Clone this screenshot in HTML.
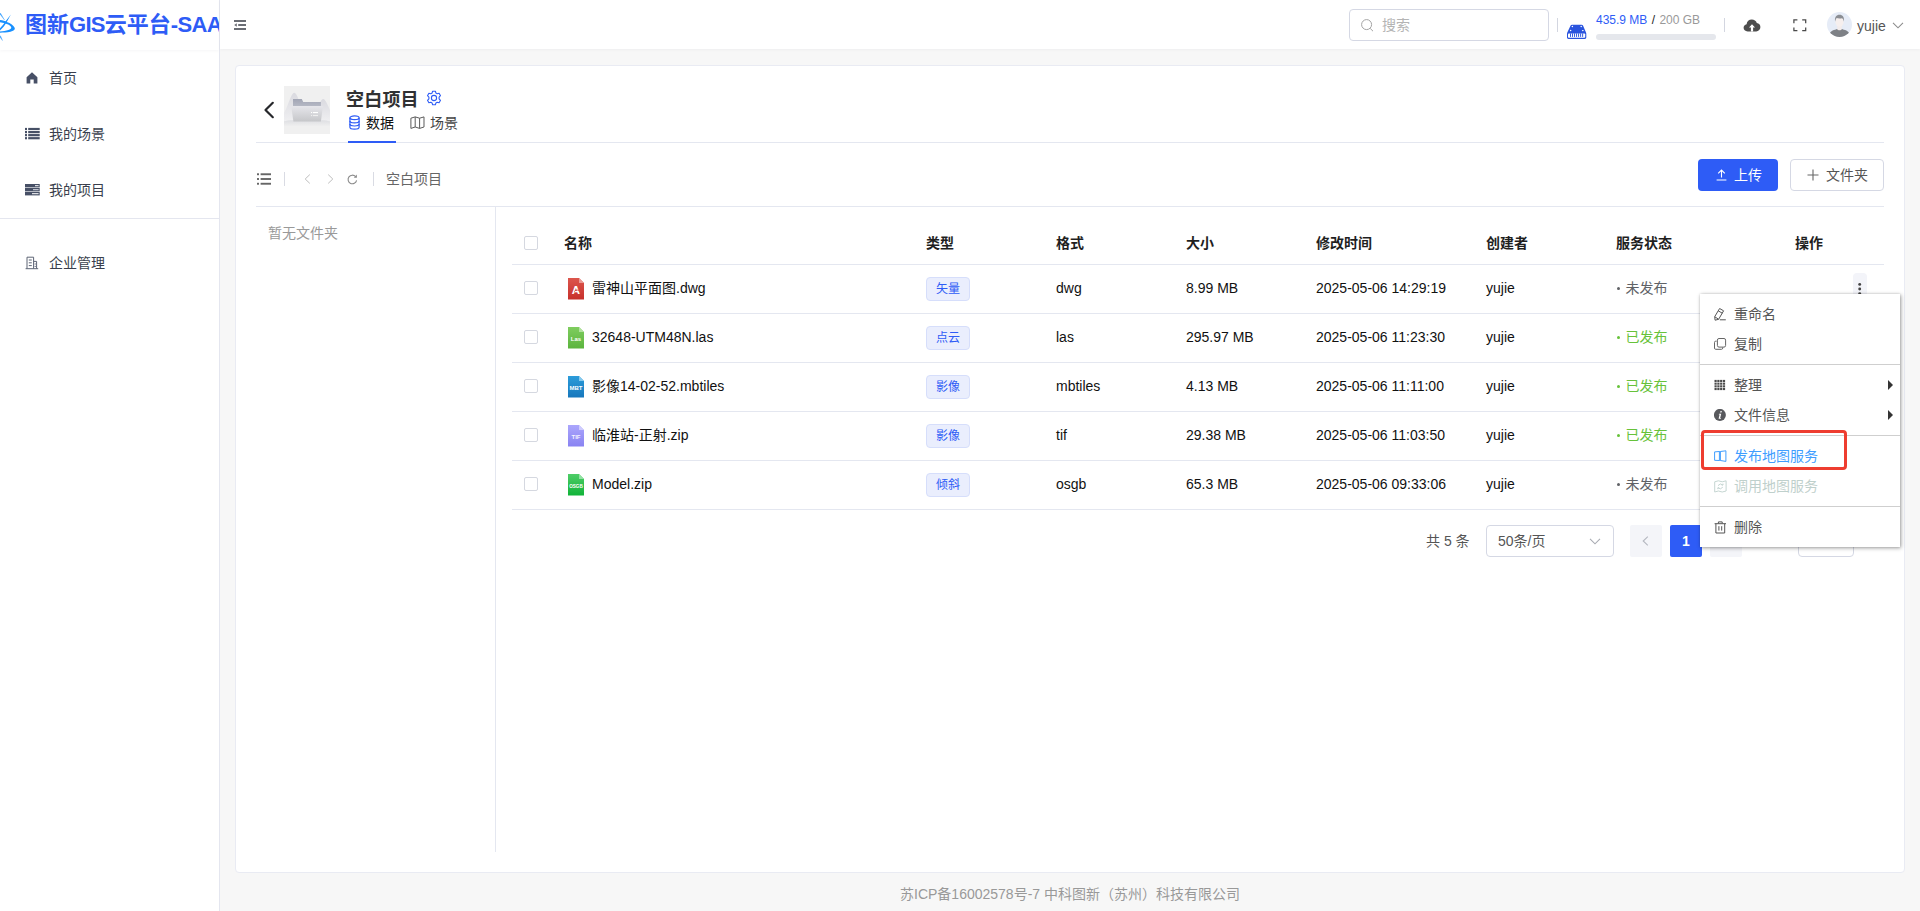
<!DOCTYPE html>
<html lang="zh-CN">
<head>
<meta charset="utf-8">
<title>图新GIS云平台-SAAS</title>
<style>
*{box-sizing:border-box;margin:0;padding:0}
html,body{width:1920px;height:911px;overflow:hidden;background:#f7f7f7}
body{font-family:"Liberation Sans","Noto Sans CJK SC",sans-serif;font-size:14px;color:#1f1f1f;position:relative}
.abs{position:absolute}
svg{display:block}
/* sidebar */
#side{position:absolute;left:0;top:0;width:220px;height:911px;background:#fff;border-right:1px solid #e4e6ef;overflow:hidden}
#logo{position:absolute;left:0;top:0;width:219px;height:50px;overflow:hidden;white-space:nowrap;box-shadow:0 1px 3px rgba(0,21,41,.04)}
#logo .t i{font-style:normal;letter-spacing:-0.7px}
#logo .t{position:absolute;left:25px;top:0;line-height:50px;font-size:22px;font-weight:bold;color:#2e5cf6;letter-spacing:0}
.mi{position:absolute;left:0;width:219px;height:56px;line-height:56px;color:#3a3f4d;font-size:14px}
.mi svg{position:absolute;left:25px;top:21px}
.mi span{position:absolute;left:49px;top:0}
/* header */
#head{position:absolute;left:220px;top:0;width:1700px;height:49px;background:#fff;box-shadow:0 1px 3px rgba(0,21,41,.04)}
/* card */
#card{position:absolute;left:235px;top:65px;width:1670px;height:808px;background:#fff;border:1px solid #e9ebf3;border-radius:4px}
.hl{position:absolute;height:1px;background:#e4e7f0}
.vl{position:absolute;width:1px;background:#e4e7f0}
/* table */
.th{position:absolute;top:234px;font-weight:bold;font-size:14px;line-height:18px;color:#1f1f1f;white-space:nowrap}
.td{position:absolute;font-size:14px;line-height:18px;color:#111;white-space:nowrap}
.cb{position:absolute;left:524px;width:14px;height:14px;border:1px solid #d5d8e0;border-radius:2px;background:#fff}
.tag{position:absolute;left:926px;width:44px;height:24px;border:1px solid #d6defb;background:#eaeefd;border-radius:4px;color:#2e5cf6;font-size:12px;line-height:22px;text-align:center}
.dot{display:inline-block;width:3.4px;height:3.4px;border-radius:50%;background:currentColor;vertical-align:middle;margin:0 5px 2px 1px}
.pub{color:#67c23a}
.unpub{color:#606266}
/* menu */
#menu{position:absolute;left:1700px;top:294px;width:200px;height:253px;background:#fff;box-shadow:1px 1px 4px rgba(0,0,0,.38),0 0 2px rgba(0,0,0,.12);}
#menu .it{position:absolute;left:0;width:200px;height:30px;line-height:30px;font-size:14px;color:#555}
#menu .it span{position:absolute;left:34px;top:0;white-space:nowrap}
#menu .it svg{position:absolute;left:14px;top:9px}
#menu .sep{position:absolute;left:0;width:200px;height:1px;background:#cfcfcf}
#menu .arr{position:absolute;left:188px;top:10px;width:0;height:0;border-left:5px solid #333;border-top:5px solid transparent;border-bottom:5px solid transparent}
</style>
</head>
<body>

<!-- ============ SIDEBAR ============ -->
<div id="side">
  <div id="logo">
    <svg class="abs" style="left:0;top:8px" width="24" height="38" viewBox="0 8 24 38">
      <path d="M0 20.1 C3 20.4 5 21.2 6.8 21.9 C10.5 23.2 13.8 25.2 14.8 28 C15.2 29.6 13.5 31 10.4 31.8 C7 32.6 3 32.7 0 32.7 L0 31.6 C3 31.3 6 30.9 8.3 30.1 C10.5 29.3 11.6 28.5 11.2 27.3 C10.6 25.8 9.2 24.8 7.5 24.2 C5 23.2 2.5 22.6 0 22.2 Z" fill="#1890ff"/>
      <path d="M10.9 14.4 L7.2 21.2 C5 25 2.8 28 0 30.6 L0 28.2 C2.2 26 3.8 24 5.4 21.6 Z" fill="#1890ff"/>
      <path d="M0 12.9 L0.8 13.2 L4.8 19.9 L4.2 20 L0 14.4 Z" fill="#2f9bff" opacity=".85"/>
      <path d="M0 35.4 L0.9 35.9 L2.9 40.8 L2.2 40.6 L0 37.4 Z" fill="#2f9bff" opacity=".8"/>
    </svg>
    <div class="t">图新<i>GIS</i>云平台<i>-SAAS</i></div>
  </div>
  <div class="mi" style="top:50px">
    <svg width="14" height="14" viewBox="0 0 14 14"><path d="M7 1.3 L1.6 6.2 V12.4 H5.3 V8.6 H8.7 V12.4 H12.4 V6.2 Z" fill="#475066"/></svg>
    <span>首页</span>
  </div>
  <div class="mi" style="top:106px">
    <svg width="15" height="14" viewBox="0 0 15 14" style="left:24.7px"><g fill="#475066"><rect x="0" y="0.9" width="2" height="2.2"/><rect x="3.2" y="0.9" width="11.5" height="2.2"/><rect x="0" y="4" width="2" height="2.2"/><rect x="3.2" y="4" width="11.5" height="2.2"/><rect x="0" y="7.05" width="2" height="2.2"/><rect x="3.2" y="7.05" width="11.5" height="2.2"/><rect x="0" y="10.1" width="2" height="2.2"/><rect x="3.2" y="10.1" width="11.5" height="2.2"/></g></svg>
    <span>我的场景</span>
  </div>
  <div class="mi" style="top:162px">
    <svg width="15" height="14" viewBox="0 0 15 14" style="left:24.7px"><g fill="#475066"><rect x="0" y="1" width="14.7" height="3.4"/><rect x="0" y="5" width="14.7" height="3.4"/><rect x="0" y="9" width="14.7" height="3.4"/></g><rect x="10" y="2.2" width="3.6" height="1" fill="#fff"/><rect x="8" y="6.2" width="5.6" height="1" fill="#dfe2ea"/><rect x="7" y="10.2" width="6.6" height="1" fill="#fff"/></svg>
    <span>我的项目</span>
  </div>
  <div class="hl" style="left:0;top:218px;width:219px;background:#e4e6ef"></div>
  <div class="mi" style="top:235px">
    <svg width="14" height="14" viewBox="0 0 14 14"><g fill="none" stroke="#5d6475" stroke-width="1"><path d="M2 12.6 V1.2 H8.6 V12.6"/><path d="M8.6 5.4 H11.6 V12.6"/><path d="M0.6 12.7 H13.2"/><path d="M3.8 4 H6.8 M3.8 6.8 H6.8 M3.8 9.6 H6.8 M9.6 8 H10.8 M9.6 10.4 H10.8"/></g></svg>
    <span>企业管理</span>
  </div>
</div>

<!-- ============ HEADER ============ -->
<div id="head">
  <!-- coordinates inside #head are page-x minus 220 -->
  <svg class="abs" style="left:14px;top:20px" width="12" height="10" viewBox="0 0 12 10"><g fill="#6a6d74"><rect x="0" y="0" width="12" height="2"/><rect x="4.2" y="4" width="7.8" height="2"/><rect x="0" y="8" width="12" height="2"/><path d="M0.2 5 L2.8 3.2 V6.8Z"/></g></svg>
  <div class="abs" style="left:1129px;top:9px;width:200px;height:32px;border:1px solid #d5d8e4;border-radius:4px;background:#fff">
    <svg class="abs" style="left:11px;top:9px" width="13" height="13" viewBox="0 0 13 13"><circle cx="5.6" cy="5.6" r="5" fill="none" stroke="#a3a3a3" stroke-width="1"/><path d="M9.2 9.4 L12 12.2" stroke="#a3a3a3" stroke-width="1" fill="none"/></svg>
    <div class="abs" style="left:32px;top:0;line-height:30px;font-size:14px;color:#b4b4b4">搜索</div>
  </div>
  <div class="vl" style="left:1337px;top:18px;height:14px;background:#d3d6e0"></div>
  <svg class="abs" style="left:1347px;top:24px" width="20" height="16" viewBox="0 0 20 16">
    <path d="M5 0.7 H14.6 Q15.6 0.7 16 1.6 L19 8.6 Q19.3 9.2 19.3 10 V13.6 Q19.3 15 17.9 15 H1.4 Q0 15 0 13.6 V10 Q0 9.2 0.3 8.6 L3.6 1.6 Q4 0.7 5 0.7Z" fill="#2a54de"/>
    <rect x="1" y="9.4" width="17.2" height="4.4" rx="0.8" fill="#fff"/>
    <g fill="#2a54de"><rect x="3.00" y="9.4" width="0.95" height="3.5"/><rect x="5.03" y="9.4" width="0.95" height="3.5"/><rect x="7.06" y="9.4" width="0.95" height="3.5"/><rect x="9.09" y="9.4" width="0.95" height="3.5"/><rect x="11.12" y="9.4" width="0.95" height="3.5"/><rect x="13.15" y="9.4" width="0.95" height="3.5"/><rect x="15.18" y="9.4" width="0.95" height="3.5"/></g>
    <g fill="#fff"><circle cx="5.4" cy="2.6" r=".75"/><circle cx="14.2" cy="2.6" r=".75"/><circle cx="3.6" cy="6.6" r=".75"/><ellipse cx="15.8" cy="6.6" rx=".95" ry=".7"/></g>
  </svg>
  <div class="abs" style="left:1376px;top:12px;font-size:12px;line-height:16px;white-space:nowrap"><span style="color:#2e5cf6">435.9 MB</span> <span style="color:#222;padding:0 1px 0 1px">/</span> <span style="color:#999">200 GB</span></div>
  <div class="abs" style="left:1376px;top:34px;width:120px;height:6px;border-radius:3px;background:#e5e7ec"></div>
  <div class="vl" style="left:1504px;top:18px;height:14px;background:#d3d6e0"></div>
  <svg class="abs" style="left:1523px;top:19px" width="18" height="13" viewBox="0 0 18 13">
    <path d="M4.6 12.4 C2.2 12.4 0.6 10.8 0.6 8.8 C0.6 7 1.8 5.6 3.6 5.2 C3.8 2.4 6 0.4 8.8 0.4 C11.2 0.4 13.2 1.8 13.8 4 C16 4.2 17.4 5.9 17.4 8 C17.4 10.4 15.6 12.4 13.2 12.4 Z" fill="#4d4d4d"/>
    <path d="M9 5.2 L12 8.6 H10.1 V12.4 H7.9 V8.6 H6 Z" fill="#fff"/>
  </svg>
  <svg class="abs" style="left:1572.6px;top:18.6px" width="14" height="13" viewBox="0 0 14 13"><g fill="none" stroke="#4a4a4a" stroke-width="1.25"><path d="M0.9 4.2 V0.9 H4.4"/><path d="M9.2 0.9 H12.7 V4.2"/><path d="M12.7 8.4 V11.7 H9.2"/><path d="M4.4 11.7 H0.9 V8.4"/></g></svg>
  <svg class="abs" style="left:1607px;top:12px" width="25" height="25" viewBox="0 0 25 25">
    <defs><clipPath id="avc"><circle cx="12.5" cy="12.5" r="12.5"/></clipPath></defs>
    <g clip-path="url(#avc)"><rect width="25" height="25" fill="#e6ecf7"/>
    <path d="M1.5 25 C2 20.5 4.5 18.6 8.2 17.8 L10 17 H15 L16.8 17.8 C20.5 18.6 23 20.5 23.5 25 Z" fill="#7e8186"/>
    <path d="M10.2 13.5 H14.8 V17.2 C14.2 18.6 10.8 18.6 10.2 17.2 Z" fill="#f3eceb"/>
    <ellipse cx="12.5" cy="9.8" rx="4.1" ry="4.9" fill="#f6efee"/>
    <path d="M8.1 9.8 C7.4 5 9.4 2.8 12.5 2.8 C15.6 2.8 17.6 5 16.9 9.8 C16.6 7.8 16 6.8 15 6.3 C13.2 6.8 10.8 6.6 9.7 6.1 C8.9 7 8.5 8 8.1 9.8 Z" fill="#8b8e93"/></g>
  </svg>
  <div class="abs" style="left:1637px;top:1px;line-height:50px;font-size:14px;color:#555">yujie</div>
  <svg class="abs" style="left:1672px;top:22px" width="12" height="7" viewBox="0 0 12 7"><path d="M1 0.8 L6 5.8 L11 0.8" fill="none" stroke="#8c8c8c" stroke-width="1.1"/></svg>
</div>

<!-- ============ CARD ============ -->
<div id="card"></div>
<svg class="abs" style="left:263px;top:100px" width="12" height="20" viewBox="0 0 12 20"><path d="M9.8 2.8 L2.5 10 L9.8 17.2" fill="none" stroke="#26272b" stroke-width="2.2" stroke-linecap="round" stroke-linejoin="round"/></svg>
<svg class="abs" style="left:284px;top:86px" width="46" height="48" viewBox="0 0 46 48">
  <defs>
    <linearGradient id="fg" x1="0" y1="0" x2="0" y2="1"><stop offset="0" stop-color="#e6e6eb"/><stop offset="1" stop-color="#c5c6c9"/></linearGradient>
    <linearGradient id="fb" x1="0" y1="0" x2="0" y2="1"><stop offset="0" stop-color="#a2a6b5"/><stop offset="1" stop-color="#b6b9c5"/></linearGradient>
    <linearGradient id="fm" x1="0" y1="0" x2="0" y2="1"><stop offset="0" stop-color="#dadae0"/><stop offset="1" stop-color="#efeff1"/></linearGradient>
    <linearGradient id="fgr" x1="0" y1="0" x2="0" y2="1"><stop offset="0" stop-color="#dcdde1"/><stop offset="1" stop-color="#f0f0f0"/></linearGradient>
  </defs>
  <rect width="46" height="48" fill="#f0f0f0"/>
  <path d="M0 27 C4 21 7 7 10.2 6.8 C13.2 7 15.5 17 19 25 V35 H0Z" fill="url(#fm)"/>
  <path d="M32 25 C35 19 37 13.2 39.2 13.1 C41.6 13.3 44 20 46 24 V35 H32Z" fill="url(#fm)"/>
  <path d="M0 35.2 C8 33.2 38 33.2 46 35.2 V40.5 H0Z" fill="url(#fgr)"/>
  <path d="M9 13.1 H17.8 L19.2 16 H36.9 V20.4 H9Z" fill="url(#fb)"/>
  <path d="M7.2 20 H38.9 L36.9 35.6 H9.4Z" fill="url(#fg)"/>
  <rect x="29" y="26" width="5" height="1.1" fill="#fff"/><rect x="29" y="29" width="5" height="1.1" fill="#eee"/><rect x="27" y="26" width="1.1" height="1.1" fill="#fff"/><rect x="27" y="29" width="1.1" height="1.1" fill="#eee"/>
</svg>
<div class="abs" style="left:346px;top:87px;font-size:18px;font-weight:bold;line-height:26px;color:#303133;white-space:nowrap;letter-spacing:.2px">空白项目</div>
<svg class="abs" style="left:426px;top:90px" width="16" height="16" viewBox="0 0 16 16"><g fill="none" stroke="#2e5cf6" stroke-width="1.1"><path d="M6.6 1.2 H9.4 L9.9 3.1 L11.2 3.8 L13.1 3.3 L14.5 5.7 L13.1 7.1 V8.9 L14.5 10.3 L13.1 12.7 L11.2 12.2 L9.9 12.9 L9.4 14.8 H6.6 L6.1 12.9 L4.8 12.2 L2.9 12.7 L1.5 10.3 L2.9 8.9 V7.1 L1.5 5.7 L2.9 3.3 L4.8 3.8 L6.1 3.1Z" stroke-linejoin="round"/><circle cx="8" cy="8" r="2.6"/></g></svg>
<svg class="abs" style="left:348.6px;top:115px" width="11" height="15" viewBox="0 0 11 15"><g fill="none" stroke="#2e5cf6" stroke-width="1.2"><ellipse cx="5.5" cy="2.8" rx="4.6" ry="1.9"/><path d="M0.9 2.8 V12.2 C0.9 13.3 3 14.1 5.5 14.1 C8 14.1 10.1 13.3 10.1 12.2 V2.8"/><path d="M0.9 6 C0.9 7.1 3 7.9 5.5 7.9 C8 7.9 10.1 7.1 10.1 6"/><path d="M0.9 9.1 C0.9 10.2 3 11 5.5 11 C8 11 10.1 10.2 10.1 9.1"/></g></svg>
<div class="abs" style="left:366px;top:113px;font-size:14px;line-height:20px;color:#111;white-space:nowrap">数据</div>
<svg class="abs" style="left:410.4px;top:116.3px" width="15" height="13.4" viewBox="0 0 15 13.4"><g fill="none" stroke="#5a5a5a" stroke-width="1" stroke-linejoin="round"><path d="M0.9 2.2 L5.2 0.9 L9.6 2.2 L14 0.9 V11 L9.6 12.4 L5.2 11 L0.9 12.4Z"/><path d="M5.2 0.9 V11 M9.6 2.2 V12.4"/></g></svg>
<div class="abs" style="left:430px;top:113px;font-size:14px;line-height:20px;color:#444;white-space:nowrap">场景</div>
<div class="hl" style="left:256px;top:142px;width:1628px"></div>
<div class="abs" style="left:348px;top:141px;width:48px;height:2px;background:#2e5cf6"></div>
<svg class="abs" style="left:257px;top:173px" width="14.4" height="12" viewBox="0 0 14.4 12"><g fill="#666"><rect x="0" y="0.3" width="2" height="1.9"/><rect x="3.6" y="0.3" width="10.6" height="1.9"/><rect x="0" y="5.05" width="2" height="1.9"/><rect x="3.6" y="5.05" width="10.6" height="1.9"/><rect x="0" y="9.8" width="2" height="1.9"/><rect x="3.6" y="9.8" width="10.6" height="1.9"/></g></svg>
<div class="vl" style="left:284px;top:172px;height:14px;background:#d9dbe3"></div>
<svg class="abs" style="left:304px;top:174px" width="7" height="10" viewBox="0 0 7 10"><path d="M5.8 0.6 L1.2 5 L5.8 9.4" fill="none" stroke="#bdbdbd" stroke-width="1"/></svg>
<svg class="abs" style="left:327px;top:174px" width="7" height="10" viewBox="0 0 7 10"><path d="M1.2 0.6 L5.8 5 L1.2 9.4" fill="none" stroke="#bdbdbd" stroke-width="1"/></svg>
<svg class="abs" style="left:347px;top:174px" width="11" height="11" viewBox="0 0 11 11"><path d="M8.6 2.6 A4.3 4.3 0 1 0 9.6 6.4" fill="none" stroke="#8a8a8a" stroke-width="1.1"/><path d="M9.9 0.6 V3.7 H6.8Z" fill="#8a8a8a"/></svg>
<div class="vl" style="left:373px;top:172px;height:14px;background:#d9dbe3"></div>
<div class="abs" style="left:386px;top:169px;font-size:14px;line-height:20px;color:#666;white-space:nowrap">空白项目</div>
<div class="abs" style="left:1698px;top:159px;width:80px;height:32px;border-radius:4px;background:#2e5cf6"><svg class="abs" style="left:18px;top:10px" width="11" height="12" viewBox="0 0 11 12"><g fill="none" stroke="#fff" stroke-width="1.1"><path d="M5.5 8.6 V1.2 M2.2 4.4 L5.5 1.1 L8.8 4.4 M0.6 11 H10.4"/></g></svg><div class="abs" style="left:36px;top:0;line-height:32px;font-size:14px;color:#fff;white-space:nowrap">上传</div></div>
<div class="abs" style="left:1790px;top:159px;width:94px;height:32px;border-radius:4px;background:#fff;border:1px solid #d5d8e4"><svg class="abs" style="left:16px;top:9px" width="12" height="12" viewBox="0 0 12 12"><path d="M6 0.5 V11.5 M0.5 6 H11.5" fill="none" stroke="#666" stroke-width="1.1"/></svg><div class="abs" style="left:35px;top:0;line-height:30px;font-size:14px;color:#555;white-space:nowrap">文件夹</div></div>
<div class="hl" style="left:256px;top:206px;width:1628px"></div>
<div class="vl" style="left:495px;top:206px;height:646px"></div>
<div class="abs" style="left:268px;top:223px;font-size:14px;line-height:20px;color:#999;white-space:nowrap">暂无文件夹</div>
<div class="cb" style="top:236px"></div>
<div class="th" style="left:564px">名称</div>
<div class="th" style="left:926px">类型</div>
<div class="th" style="left:1056px">格式</div>
<div class="th" style="left:1186px">大小</div>
<div class="th" style="left:1316px">修改时间</div>
<div class="th" style="left:1486px">创建者</div>
<div class="th" style="left:1616px">服务状态</div>
<div class="th" style="left:1795px">操作</div>
<div class="hl" style="left:512px;top:264px;width:1372px"></div>
<div class="cb" style="top:281px"></div>
<svg class="abs" style="left:568px;top:278.3px" width="16" height="21.5" viewBox="0 0 16 21.5"><defs><linearGradient id="fi0" x1="0" y1="0" x2="0" y2="1"><stop offset="0" stop-color="#dc564d"/><stop offset="1" stop-color="#c7302b"/></linearGradient></defs><path d="M0 0 H11 L16 5 V21.5 H0Z" fill="url(#fi0)"/><path d="M11 0 L16 5 H11Z" fill="#eb9a94"/><text x="8" y="15.6" font-size="11.5" font-weight="bold" fill="#fff" text-anchor="middle" font-family="Liberation Sans,sans-serif">A</text><path d="M6.2 13.6 C8.5 11.4 10.5 11.6 12.6 14.2" stroke="#d24a42" stroke-width=".9" fill="none"/></svg>
<div class="td" style="left:592px;top:279px">雷神山平面图.dwg</div>
<div class="tag" style="top:277px">矢量</div>
<div class="td" style="left:1056px;top:279px">dwg</div>
<div class="td" style="left:1186px;top:279px">8.99 MB</div>
<div class="td" style="left:1316px;top:279px">2025-05-06 14:29:19</div>
<div class="td" style="left:1486px;top:279px">yujie</div>
<div class="td unpub" style="left:1616px;top:279px"><i class="dot"></i>未发布</div>
<div class="hl" style="left:512px;top:313px;width:1372px"></div>
<div class="cb" style="top:330px"></div>
<svg class="abs" style="left:568px;top:327.3px" width="16" height="21.5" viewBox="0 0 16 21.5"><defs><linearGradient id="fi1" x1="0" y1="0" x2="0" y2="1"><stop offset="0" stop-color="#7fcd5f"/><stop offset="1" stop-color="#5bb43d"/></linearGradient></defs><path d="M0 0 H11 L16 5 V21.5 H0Z" fill="url(#fi1)"/><path d="M11 0 L16 5 H11Z" fill="#b2e29e"/><text x="8" y="14.1" font-size="6" font-weight="bold" fill="#fff" text-anchor="middle" font-family="Liberation Sans,sans-serif">Las</text></svg>
<div class="td" style="left:592px;top:328px">32648-UTM48N.las</div>
<div class="tag" style="top:326px">点云</div>
<div class="td" style="left:1056px;top:328px">las</div>
<div class="td" style="left:1186px;top:328px">295.97 MB</div>
<div class="td" style="left:1316px;top:328px">2025-05-06 11:23:30</div>
<div class="td" style="left:1486px;top:328px">yujie</div>
<div class="td pub" style="left:1616px;top:328px"><i class="dot"></i>已发布</div>
<div class="hl" style="left:512px;top:362px;width:1372px"></div>
<div class="cb" style="top:379px"></div>
<svg class="abs" style="left:568px;top:376.3px" width="16" height="21.5" viewBox="0 0 16 21.5"><defs><linearGradient id="fi2" x1="0" y1="0" x2="0" y2="1"><stop offset="0" stop-color="#2c9cda"/><stop offset="1" stop-color="#1777bc"/></linearGradient></defs><path d="M0 0 H11 L16 5 V21.5 H0Z" fill="url(#fi2)"/><path d="M11 0 L16 5 H11Z" fill="#86c9ed"/><text x="8" y="14.1" font-size="6" font-weight="bold" fill="#fff" text-anchor="middle" font-family="Liberation Sans,sans-serif">MBT</text></svg>
<div class="td" style="left:592px;top:377px">影像14-02-52.mbtiles</div>
<div class="tag" style="top:375px">影像</div>
<div class="td" style="left:1056px;top:377px">mbtiles</div>
<div class="td" style="left:1186px;top:377px">4.13 MB</div>
<div class="td" style="left:1316px;top:377px">2025-05-06 11:11:00</div>
<div class="td" style="left:1486px;top:377px">yujie</div>
<div class="td pub" style="left:1616px;top:377px"><i class="dot"></i>已发布</div>
<div class="hl" style="left:512px;top:411px;width:1372px"></div>
<div class="cb" style="top:428px"></div>
<svg class="abs" style="left:568px;top:425.3px" width="16" height="21.5" viewBox="0 0 16 21.5"><defs><linearGradient id="fi3" x1="0" y1="0" x2="0" y2="1"><stop offset="0" stop-color="#aba6fc"/><stop offset="1" stop-color="#8983f2"/></linearGradient></defs><path d="M0 0 H11 L16 5 V21.5 H0Z" fill="url(#fi3)"/><path d="M11 0 L16 5 H11Z" fill="#cfccfe"/><text x="8" y="14.1" font-size="6" font-weight="bold" fill="#f3f2ff" text-anchor="middle" font-family="Liberation Sans,sans-serif">TIF</text></svg>
<div class="td" style="left:592px;top:426px">临淮站-正射.zip</div>
<div class="tag" style="top:424px">影像</div>
<div class="td" style="left:1056px;top:426px">tif</div>
<div class="td" style="left:1186px;top:426px">29.38 MB</div>
<div class="td" style="left:1316px;top:426px">2025-05-06 11:03:50</div>
<div class="td" style="left:1486px;top:426px">yujie</div>
<div class="td pub" style="left:1616px;top:426px"><i class="dot"></i>已发布</div>
<div class="hl" style="left:512px;top:460px;width:1372px"></div>
<div class="cb" style="top:477px"></div>
<svg class="abs" style="left:568px;top:474.3px" width="16" height="21.5" viewBox="0 0 16 21.5"><defs><linearGradient id="fi4" x1="0" y1="0" x2="0" y2="1"><stop offset="0" stop-color="#4fcd68"/><stop offset="1" stop-color="#10b338"/></linearGradient></defs><path d="M0 0 H11 L16 5 V21.5 H0Z" fill="url(#fi4)"/><path d="M11 0 L16 5 H11Z" fill="#93e2a4"/><text x="8" y="13.8" font-size="4.6" font-weight="bold" fill="#fff" text-anchor="middle" font-family="Liberation Sans,sans-serif">OSGB</text></svg>
<div class="td" style="left:592px;top:475px">Model.zip</div>
<div class="tag" style="top:473px">倾斜</div>
<div class="td" style="left:1056px;top:475px">osgb</div>
<div class="td" style="left:1186px;top:475px">65.3 MB</div>
<div class="td" style="left:1316px;top:475px">2025-05-06 09:33:06</div>
<div class="td" style="left:1486px;top:475px">yujie</div>
<div class="td unpub" style="left:1616px;top:475px"><i class="dot"></i>未发布</div>
<div class="hl" style="left:512px;top:509px;width:1372px"></div>
<div class="abs" style="left:1853px;top:273px;width:14px;height:30px;border-radius:4px;background:#f3f4f9"></div>
<svg class="abs" style="left:1856px;top:280px" width="8" height="18" viewBox="0 0 8 18"><g fill="#444"><circle cx="3.7" cy="4.4" r="1.45"/><circle cx="3.7" cy="9" r="1.45"/><circle cx="3.7" cy="13.6" r="1.45"/></g></svg>
<div class="abs" style="left:1426px;top:531px;font-size:14px;line-height:20px;color:#555;white-space:nowrap">共 5 条</div>
<div class="abs" style="left:1486px;top:525px;width:128px;height:32px;border:1px solid #d5d8e4;border-radius:4px;background:#fff"><div class="abs" style="left:11px;top:0;line-height:30px;font-size:14px;color:#555;white-space:nowrap">50条/页</div><svg class="abs" style="left:102px;top:12px" width="12" height="7" viewBox="0 0 12 7"><path d="M1 0.8 L6 5.8 L11 0.8" fill="none" stroke="#a8abb2" stroke-width="1.1"/></svg></div>
<div class="abs" style="left:1630px;top:525px;width:32px;height:32px;border-radius:2px;background:#f4f5f9"><svg class="abs" style="left:12px;top:11px" width="7" height="10" viewBox="0 0 7 10"><path d="M5.8 0.6 L1.2 5 L5.8 9.4" fill="none" stroke="#b5b8c0" stroke-width="1.1"/></svg></div>
<div class="abs" style="left:1670px;top:525px;width:32px;height:32px;border-radius:2px;background:#2e5cf6;color:#fff;font-weight:bold;font-size:14px;line-height:32px;text-align:center">1</div>
<div class="abs" style="left:1710px;top:525px;width:32px;height:32px;border-radius:2px;background:#f4f5f9"><svg class="abs" style="left:13px;top:11px" width="7" height="10" viewBox="0 0 7 10"><path d="M1.2 0.6 L5.8 5 L1.2 9.4" fill="none" stroke="#b5b8c0" stroke-width="1.1"/></svg></div>
<div class="abs" style="left:1758px;top:530px;font-size:14px;line-height:20px;color:#555;white-space:nowrap">前往</div>
<div class="abs" style="left:1798px;top:525px;width:56px;height:32px;border:1px solid #d5d8e4;border-radius:4px;background:#fff;text-align:center;line-height:30px;color:#555">1</div>
<div class="abs" style="left:1862px;top:530px;font-size:14px;line-height:20px;color:#555;white-space:nowrap">页</div>
<!-- ============ CONTEXT MENU ============ -->
<div id="menu">
  <div class="it" style="top:5px"><svg width="13" height="13" viewBox="0 0 13 13" style="top:8.5px"><g fill="none" stroke="#555" stroke-width="1" stroke-linejoin="round"><path d="M5.6 0.5 L9.6 2.8 L4.6 11.3 L1.1 12.2 L0.7 8.7Z"/><path d="M4.2 2.8 L8.3 5.2 M0.8 8.8 L4.5 11.2"/><path d="M5.8 11.8 H11.8"/></g></svg><span>重命名</span></div>
  <div class="it" style="top:35px"><svg width="13" height="13" viewBox="0 0 13 13"><g fill="none" stroke="#666" stroke-width="1"><rect x="3.4" y="0.5" width="8.2" height="8.6" rx="1.6"/><path d="M2.6 3.2 H1.7 Q0.5 3.2 0.5 4.4 V10.1 Q0.5 11.3 1.7 11.3 H7.5 Q8.7 11.3 8.7 10.1 V9.4"/></g></svg><span>复制</span></div>
  <div class="sep" style="top:70px"></div>
  <div class="it" style="top:76px"><svg width="13" height="13" viewBox="0 0 13 13"><g fill="#4a4a4a"><rect x="0.5" y="0.9" width="2.2" height="2.1"/><rect x="3.3" y="0.9" width="2.2" height="2.1"/><rect x="6.1" y="0.9" width="2.2" height="2.1"/><rect x="8.9" y="0.9" width="2.2" height="2.1"/><rect x="0.5" y="3.6" width="2.2" height="2.1"/><rect x="3.3" y="3.6" width="2.2" height="2.1"/><rect x="6.1" y="3.6" width="2.2" height="2.1"/><rect x="8.9" y="3.6" width="2.2" height="2.1"/><rect x="0.5" y="6.3" width="2.2" height="2.1"/><rect x="3.3" y="6.3" width="2.2" height="2.1"/><rect x="6.1" y="6.3" width="2.2" height="2.1"/><rect x="8.9" y="6.3" width="2.2" height="2.1"/><rect x="0.5" y="9.0" width="2.2" height="2.1"/><rect x="3.3" y="9.0" width="2.2" height="2.1"/><rect x="6.1" y="9.0" width="2.2" height="2.1"/><rect x="8.9" y="9.0" width="2.2" height="2.1"/></g></svg><span>整理</span><i class="arr"></i></div>
  <div class="it" style="top:106px"><svg width="13" height="13" viewBox="0 0 13 13"><circle cx="5.9" cy="5.9" r="6" fill="#58595d"/><path d="M6.5 2.1 H7.8 L7.5 3.4 H6.2Z M5 4.7 H7.2 L6.2 9 H7 L6.8 9.8 H4.6 L5.6 5.5 H4.8Z" fill="#fff"/></svg><span>文件信息</span><i class="arr"></i></div>
  <div class="sep" style="top:141px"></div>
  <div class="it" style="top:147px;color:#409eff"><svg width="13" height="13" viewBox="0 0 13 13"><g fill="none" stroke="#409eff" stroke-width="1" stroke-linejoin="round"><path d="M0.6 1.9 L5.4 1.5 V10.5 L0.6 10.3Z"/><path d="M6.4 1.5 L11.9 0.8 V11.4 L6.4 10.5Z"/><path d="M5.4 1.5 H6.4 M5.4 10.5 H6.4"/></g></svg><span>发布地图服务</span></div>
  <div class="it" style="top:177px;color:#bfd0cc"><svg width="13" height="13" viewBox="0 0 13 13"><g fill="none" stroke="#c5d6d2" stroke-width="1"><path d="M0.7 1.8 L4.4 0.8 L8.2 1.8 L12.1 0.8 V11 L8.2 12 L4.4 11 L0.7 12Z" stroke-linejoin="round"/><path d="M4 5.6 Q6.4 2.6 8.8 5 M8.8 7.2 Q6.4 10.2 4 7.8 M7.6 5 H9 V3.6 M5.2 7.8 H3.8 V9.2"/></g></svg><span>调用地图服务</span></div>
  <div class="sep" style="top:212px"></div>
  <div class="it" style="top:218px"><svg width="13" height="13" viewBox="0 0 13 13"><g fill="none" stroke="#555" stroke-width="1"><path d="M0.6 2.7 H12 M4.4 2.5 V0.9 H8.2 V2.5 M1.9 2.8 V12 H10.7 V2.8 M4.9 5.2 V9.6 M7.7 5.2 V9.6"/></g></svg><span>删除</span></div>
  <div class="abs" style="left:1px;top:136px;width:146px;height:40px;border:3px solid #ee3d30;border-radius:4px"></div>
</div>

<!-- ============ FOOTER ============ -->
<div class="abs" style="left:220px;top:885px;width:1700px;text-align:center;font-size:14px;line-height:18px;color:#999">苏ICP备16002578号-7 中科图新（苏州）科技有限公司</div>

</body>
</html>
